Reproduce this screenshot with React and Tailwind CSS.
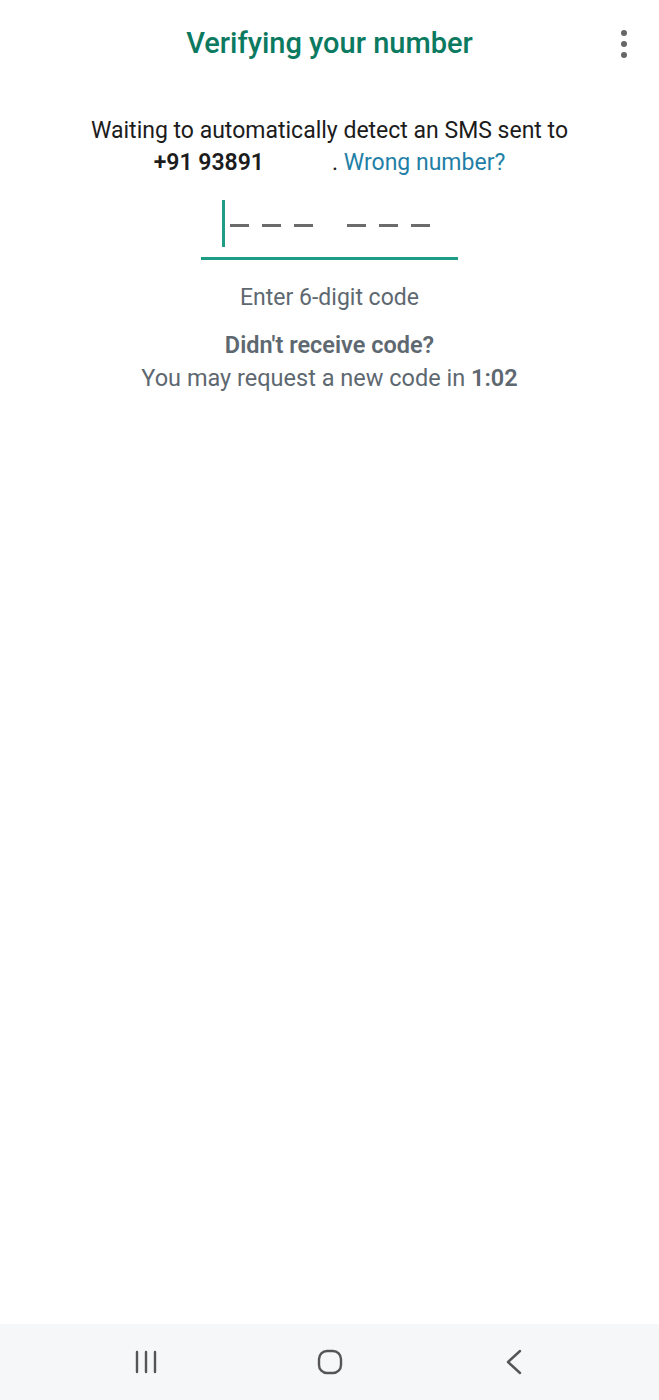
import React from "react";

const Dash = ({ className = "" }) => (
    <div className={`w-[19px] h-[2.5px] bg-[#6b6b6b] ${className}`} />
);

const NavBar = () => (
    <div className="h-[76px] bg-[#f6f7f9] flex items-center justify-center gap-[124px]">
        {/* recent apps */}
        <div className="w-[60px] flex justify-center">
            <svg width="24" height="24" viewBox="0 0 24 24" fill="none" stroke="#555" strokeWidth="2.4" strokeLinecap="round">
                <path d="M3 2v20M12 2v20M21 2v20" />
            </svg>
        </div>
        {/* home */}
        <div className="w-[60px] flex justify-center">
            <svg width="26" height="26" viewBox="0 0 26 26" fill="none" stroke="#555" strokeWidth="2.4">
                <rect x="2" y="2" width="22" height="22" rx="8" />
            </svg>
        </div>
        {/* back */}
        <div className="w-[60px] flex justify-center">
            <svg width="18" height="26" viewBox="0 0 18 26" fill="none" stroke="#555" strokeWidth="2.4" strokeLinecap="round" strokeLinejoin="round">
                <path d="M15 2L3 13l12 11" />
            </svg>
        </div>
    </div>
);

const App = () => {
    return (
        <div className="min-h-[1400px] flex flex-col bg-white font-['Roboto','Liberation_Sans',sans-serif]">
            <div className="flex-1">
                {/* header */}
                <div className="relative h-[88px] flex items-center justify-center">
                    <h1 className="text-[29px] font-medium text-[#0b7a60]">Verifying your number</h1>
                    <div className="absolute right-[32px] top-[30px] flex flex-col gap-[5px]">
                        <div className="w-[6px] h-[6px] rounded-full bg-[#666]" />
                        <div className="w-[6px] h-[6px] rounded-full bg-[#666]" />
                        <div className="w-[6px] h-[6px] rounded-full bg-[#666]" />
                    </div>
                </div>

                {/* message */}
                <div className="mt-[27px] text-center text-[23px] leading-[32px] text-[#1c1c1c]">
                    <p>Waiting to automatically detect an SMS sent to</p>
                    <p>
                        <span className="font-semibold">+91 93891</span>
                        <span className="inline-block w-[68px]" />
                        . <span className="text-[#1f7fa6]">Wrong number?</span>
                    </p>
                </div>

                {/* code input */}
                <div className="w-[257px] mx-auto mt-[21px]">
                    <div className="h-[47px] flex items-center pl-[21px]">
                        <div className="w-[3px] h-[47px] bg-[#1e9c85]" />
                        <Dash className="ml-[5px] mt-[4px]" />
                        <Dash className="ml-[13px] mt-[4px]" />
                        <Dash className="ml-[13px] mt-[4px]" />
                        <Dash className="ml-[34px] mt-[4px]" />
                        <Dash className="ml-[13px] mt-[4px]" />
                        <Dash className="ml-[13px] mt-[4px]" />
                    </div>
                    <div className="mt-[10px] h-[3px] bg-[#1e9c85]" />
                </div>

                <p className="mt-[24px] text-center text-[23px] leading-[28px] text-[#5e6870]">Enter 6-digit code</p>

                <div className="mt-[17px] text-center text-[23.5px] leading-[33px] text-[#5e6870]">
                    <p className="font-semibold">Didn't receive code?</p>
                    <p>
                        You may request a new code in <span className="font-semibold">1:02</span>
                    </p>
                </div>
            </div>
            <NavBar />
        </div>
    );
};

export default App;
